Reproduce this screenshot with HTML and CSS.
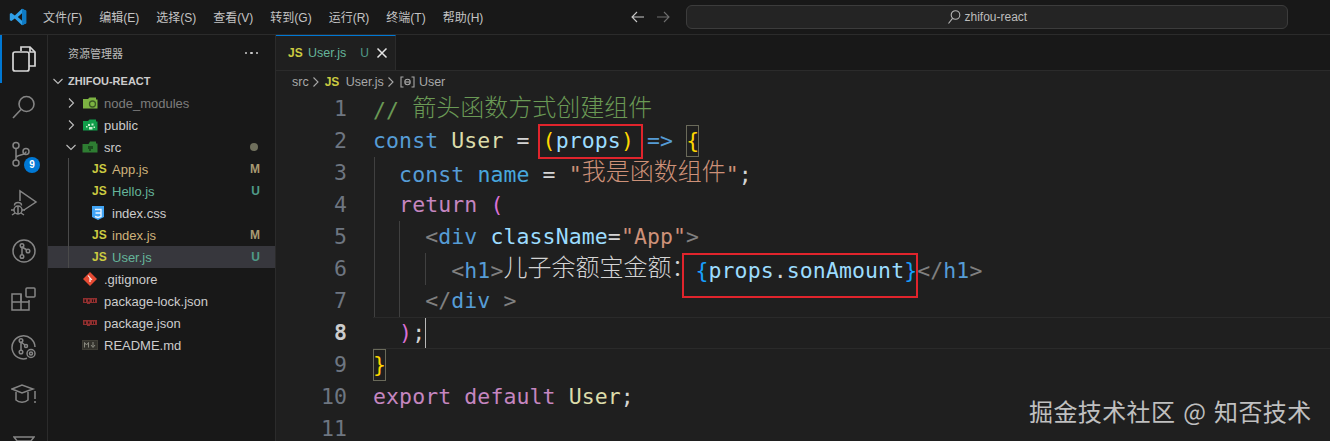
FILE: index.html
```html
<!DOCTYPE html>
<html lang="zh">
<head>
<meta charset="utf-8">
<title>User.js - zhifou-react</title>
<link rel="stylesheet" href="styles.css">
</head>
<body>
<div class="app">
  <header class="titlebar">
    <svg class="logo" width="18" height="18" viewBox="0 0 18 18"><path fill="#2f9fe8" d="M13 .8 17.2 2.800v12.400L13 17.200 5.800 10.400 2.400 13 .8 12.200V5.800L2.400 5l3.400 2.600zM13 5.200 8.800 9 13 12.800z"/><path fill="#0e7ac4" d="M13 .8 17.200 2.800v12.400L13 17.200z"/></svg>
    <nav class="menu">
      <span>文件(F)</span><span>编辑(E)</span><span>选择(S)</span><span>查看(V)</span><span>转到(G)</span><span>运行(R)</span><span>终端(T)</span><span>帮助(H)</span>
    </nav>
    <div class="navarrows">
      <svg width="16" height="16" viewBox="0 0 16 16" fill="none" stroke="#c8c8c8" stroke-width="1.1"><path d="M14 8H2.500M7 3 2 8l5 5"/></svg>
      <svg class="dim" width="16" height="16" viewBox="0 0 16 16" fill="none" stroke="#6e6e6e" stroke-width="1.1"><path d="M2 8h11.500M9 3l5 5-5 5"/></svg>
    </div>
    <div class="search">
      <svg width="14" height="16" viewBox="0 0 14 16" fill="none" stroke="#b5b5b5" stroke-width="1.100"><circle cx="8.500" cy="6" r="4.300"/><path d="M5.500 9.300 1.500 14.500"/></svg>
      <span>zhifou-react</span>
    </div>
  </header>

  <div class="workbench">
    <aside class="activity">
      <div class="act active">
        <svg width="26" height="28" viewBox="0 0 26 28" fill="none" stroke="#d7d7d7" stroke-width="1.700"><path d="M10 6V2h9l5 5v14h-6"/><path d="M19 2v5h5"/><rect x="2" y="7" width="16" height="19" rx="2"/></svg>
      </div>
      <div class="act">
        <svg width="26" height="26" viewBox="0 0 26 26" fill="none" stroke="#858585" stroke-width="1.600"><circle cx="15.500" cy="10" r="7.500"/><path d="M10 15.500 2 24"/></svg>
      </div>
      <div class="act">
        <svg width="26" height="28" viewBox="0 0 26 28" fill="none" stroke="#858585" stroke-width="1.500"><circle cx="5" cy="4.500" r="3"/><circle cx="5" cy="22" r="3"/><circle cx="15" cy="10.500" r="3"/><path d="M5 7.500V19M5 17c0-4 10-2 10-6.500"/></svg>
        <span class="badge">9</span>
      </div>
      <div class="act">
        <svg width="28" height="28" viewBox="0 0 28 28" fill="none" stroke="#858585" stroke-width="1.500"><path d="M10 12V2l16 11-12 8"/><circle cx="8" cy="21" r="4"/><path d="M4.500 16.500a3.500 3 0 0 1 7 0M8 17v8M1 21h3M12 21h3M2 26l3-2M14 26l-3-2"/></svg>
      </div>
      <div class="act">
        <svg width="24" height="24" viewBox="0 0 24 24" fill="none" stroke="#858585" stroke-width="1.500"><circle cx="12" cy="12" r="11"/><circle cx="10" cy="6.500" r="1.800"/><circle cx="10" cy="17.500" r="1.800"/><circle cx="16" cy="12" r="1.800"/><path d="M10 8v8M10 8l5 3"/></svg>
      </div>
      <div class="act">
        <svg width="25" height="25" viewBox="0 0 25 25" fill="none" stroke="#858585" stroke-width="1.500"><path d="M1 7h9v16H1zM1 15h17v8h-8"/><rect x="15" y="1" width="9" height="9" rx="1"/><path d="M10 7v8M18 15v-2"/></svg>
      </div>
      <div class="act">
        <svg width="26" height="26" viewBox="0 0 26 26" fill="none" stroke="#858585" stroke-width="1.500"><path d="M16 24.300A11.500 11.500 0 1 1 24 13"/><circle cx="10" cy="6.500" r="1.800"/><circle cx="10" cy="18" r="1.800"/><circle cx="15" cy="12" r="1.500"/><path d="M10 8v8.500M10 8l4 3"/><circle cx="20" cy="19.500" r="4"/><circle cx="20" cy="19.500" r="1.500"/></svg>
      </div>
      <div class="act">
        <svg width="26" height="24" viewBox="0 0 26 24" fill="none" stroke="#858585" stroke-width="1.500"><path d="M1 6 11 2l11 4-11 4zM5 9v8c3 3 9 3 12 0V9M24 8v8M24 18v2"/></svg>
      </div>
      <div class="act last">
        <svg width="22" height="14" viewBox="0 0 22 14" fill="none" stroke="#858585" stroke-width="1.500"><path d="M1 1h20l-7 9v4H8v-4zM4 5h14"/></svg>
      </div>
    </aside>

    <aside class="sidebar">
      <div class="side-head"><span>资源管理器</span><span class="dots"><i></i><i></i><i></i></span></div>
      <div class="section">
        <svg class="chev" width="12" height="12" viewBox="0 0 12 12"><path d="M1.500 4 6 8.500 10.500 4"/></svg>
        <span>ZHIFOU-REACT</span>
      </div>
      <ul class="tree">
        <li class="row l1 muted">
          <svg class="chev" width="12" height="12" viewBox="0 0 12 12"><path d="M4 1.500 8.500 6 4 10.500"/></svg>
          <svg class="ficon" width="16" height="14" viewBox="0 0 16 14"><path fill="#7cb342" d="M1 3h5l1.500-1.500H14v2h1.500v9H1z"/><circle cx="10.500" cy="8" r="3" fill="none" stroke="#3c5a25" stroke-width="1.300"/></svg>
          <span class="name">node_modules</span>
        </li>
        <li class="row l1">
          <svg class="chev" width="12" height="12" viewBox="0 0 12 12"><path d="M4 1.500 8.500 6 4 10.500"/></svg>
          <svg class="ficon" width="16" height="14" viewBox="0 0 16 14"><path fill="#119c4a" d="M1 3h5l1.500-1.500H14v2h1.500v9H1z"/><path fill="#c8f0d0" d="M6 6h2v2H6zM9.500 5.500h2v2h-2zM7 9h3.500v2.500H7zM4 8h1.500v1.500H4zM11.500 8.500H13V10h-1.500z"/></svg>
          <span class="name">public</span>
        </li>
        <li class="row l1">
          <svg class="chev" width="12" height="12" viewBox="0 0 12 12"><path d="M1.500 4 6 8.500 10.500 4"/></svg>
          <svg class="ficon" width="16" height="14" viewBox="0 0 16 14"><path fill="#2e7d32" d="M.500 4h6L8 1.500h6v2h1.500v9H.500z"/><path fill="#1b4d1e" d="M6 6h5v3H9v2H7V9H6z"/></svg>
          <span class="name">src</span>
          <span class="dotmark"></span>
        </li>
        <li class="row l2 mod">
          <span class="js">JS</span><span class="name">App.js</span><span class="git">M</span>
        </li>
        <li class="row l2 unt">
          <span class="js">JS</span><span class="name">Hello.js</span><span class="git">U</span>
        </li>
        <li class="row l2">
          <svg class="cssicon" width="12" height="14" viewBox="0 0 12 14"><path fill="#42a5f5" d="M0 0h12v11l-6 3-6-3z"/><path fill="none" stroke="#e8f4ff" stroke-width="1.400" d="M3 3.500h6v7l-3 1-3-1M3.500 7H9"/></svg>
          <span class="name">index.css</span>
        </li>
        <li class="row l2 mod">
          <span class="js">JS</span><span class="name">index.js</span><span class="git">M</span>
        </li>
        <li class="row l2 unt selected">
          <span class="js">JS</span><span class="name">User.js</span><span class="git">U</span>
        </li>
        <li class="row l1 file">
          <svg class="ficon" width="16" height="16" viewBox="0 0 16 16"><path fill="#e64a33" d="M8 1l7 7-7 7-7-7z"/><path fill="none" stroke="#fff" stroke-width="1.100" d="M6 4.500 10 9M8 7v4"/></svg>
          <span class="name">.gitignore</span>
        </li>
        <li class="row l1 file">
          <svg class="ficon" width="16" height="14" viewBox="0 0 16 14"><path fill="#8f2f2f" d="M1 4h14v5H8v1H5V9H1z"/><path fill="#1f1313" d="M2.500 5.500h1.500v2.500H2.500zM6 5.500h1.500v2H6zM10 5.500h1v2.500h-1zM12 5.500h1v2.500h-1z"/></svg>
          <span class="name">package-lock.json</span>
        </li>
        <li class="row l1 file">
          <svg class="ficon" width="16" height="14" viewBox="0 0 16 14"><path fill="#8f2f2f" d="M1 4h14v5H8v1H5V9H1z"/><path fill="#1f1313" d="M2.500 5.500h1.500v2.500H2.500zM6 5.500h1.500v2H6zM10 5.500h1v2.500h-1zM12 5.500h1v2.500h-1z"/></svg>
          <span class="name">package.json</span>
        </li>
        <li class="row l1 file">
          <svg class="ficon" width="16" height="12" viewBox="0 0 16 12"><rect x=".5" y="1.500" width="15" height="9" fill="#33322c" stroke="#3f3e36"/><path fill="none" stroke="#8a8a80" stroke-width="1" d="M2.500 8.500v-5l2 2.500 2-2.500v5M11 3v5M9 6l2 2.500L13 6"/></svg>
          <span class="name">README.md</span>
        </li>
      </ul>
    </aside>

    <main class="editor">
      <div class="tabs">
        <div class="tab">
          <span class="js">JS</span><span class="tabname">User.js</span><span class="tabgit">U</span>
          <svg width="14" height="14" viewBox="0 0 14 14" fill="none" stroke="#e6e6e6" stroke-width="1.500"><path d="M2.500 2.500l9 9M11.500 2.500l-9 9"/></svg>
        </div>
      </div>
      <div class="crumbs">
        <span>src</span>
        <svg width="10" height="12" viewBox="0 0 10 12"><path d="M2.500 1.500 7 6l-4.500 4.500"/></svg>
        <span class="js">JS</span>
        <span>User.js</span>
        <svg width="10" height="12" viewBox="0 0 10 12"><path d="M2.500 1.500 7 6l-4.500 4.500"/></svg>
        <svg class="sym" width="15" height="12" viewBox="0 0 15 12" fill="none" stroke="#75beff" stroke-width="1.200"><path d="M3.500 1H1v10h2.500M11.500 1H14v10h-2.500"/><circle cx="7.500" cy="6" r="2.700"/><path d="M5 6h5"/></svg>
        <span>User</span>
      </div>
      <div class="code">
        <i class="guide g1"></i><i class="guide g2"></i><i class="guide g3"></i>
        <div class="line"><span class="ln">1</span><code class="cm">// <b>箭头函数方式创建组件</b></code></div>
        <div class="line"><span class="ln">2</span><code><span class="kw">const</span> <span class="fn">User</span> = <span class="br">(</span><span class="var">props</span><span class="br">)</span> <span class="kw">=&gt;</span> <span class="br match">{</span></code></div>
        <div class="line"><span class="ln">3</span><code>  <span class="kw">const</span> <span class="cst">name</span> = <span class="str">"<b>我是函数组件</b>"</span>;</code></div>
        <div class="line"><span class="ln">4</span><code>  <span class="ret">return</span> <span class="br2">(</span></code></div>
        <div class="line"><span class="ln">5</span><code>    <span class="tg">&lt;</span><span class="kw">div</span> <span class="var">className</span>=<span class="str">"App"</span><span class="tg">&gt;</span></code></div>
        <div class="line"><span class="ln">6</span><code>      <span class="tg">&lt;</span><span class="kw">h1</span><span class="tg">&gt;</span><b>儿子余额宝金额：</b><span class="br3">{</span><span class="var">props</span>.<span class="var">sonAmount</span><span class="br3">}</span><span class="tg">&lt;/</span><span class="kw">h1</span><span class="tg">&gt;</span></code></div>
        <div class="line"><span class="ln">7</span><code>    <span class="tg">&lt;/</span><span class="kw">div</span> <span class="tg">&gt;</span></code></div>
        <div class="line current"><span class="ln">8</span><code>  <span class="br2">)</span>;<i class="cursor"></i></code></div>
        <div class="line"><span class="ln">9</span><code><span class="br match">}</span></code></div>
        <div class="line"><span class="ln">10</span><code><span class="ret">export</span> <span class="ret">default</span> <span class="fn">User</span>;</code></div>
        <div class="line"><span class="ln">11</span><code></code></div>
        <i class="redbox r1"></i><i class="redbox r2"></i>
      </div>
    </main>
  </div>
  <div class="watermark">掘金技术社区 @ 知否技术</div>
</div>
</body>
</html>
```
FILE: styles.css
```css
* { box-sizing: border-box; }
html, body { margin: 0; padding: 0; background: #181818; }
.app {
  position: relative;
  width: 1330px;
  height: 441px;
  overflow: hidden;
  display: flex;
  flex-direction: column;
  background: #181818;
  color: #ccc;
  font-family: "Liberation Sans", "Noto Sans CJK SC", sans-serif;
  font-size: 13px;
}

/* title bar */
.titlebar {
  flex: 0 0 35px;
  display: flex;
  align-items: center;
  border-bottom: 1px solid #2b2b2b;
  position: relative;
}
.logo { margin-left: 9px; }
.menu { display: flex; margin: -2px 0 0 16px; gap: 17px; font-size: 12px; color: #c4c4c4; }
.navarrows { display: flex; gap: 9px; margin-left: 147px; }
.search {
  margin-left: 15px;
  width: 602px;
  height: 24px;
  display: flex;
  justify-content: center;
  align-items: center;
  gap: 3px;
  background: #242424;
  border: 1px solid #3c3c3c;
  border-radius: 6px;
  font-size: 12px;
  color: #bdbdbd;
}

.workbench { flex: 1; display: flex; min-height: 0; }

/* activity bar */
.activity {
  flex: 0 0 48px;
  border-right: 1px solid #2b2b2b;
  display: flex;
  flex-direction: column;
  overflow: hidden;
}
.act {
  flex: 0 0 48px;
  display: flex;
  align-items: center;
  justify-content: center;
  position: relative;
}
.act.active { box-shadow: inset 2px 0 0 #0078d4; }
.badge {
  position: absolute;
  left: 24px;
  top: 26px;
  width: 16px;
  height: 16px;
  border-radius: 50%;
  background: #0078d4;
  color: #fff;
  font-size: 10px;
  font-weight: 700;
  line-height: 16px;
  text-align: center;
}

/* sidebar */
.sidebar {
  flex: 0 0 228px;
  border-right: 1px solid #2b2b2b;
  display: flex;
  flex-direction: column;
}
.side-head {
  flex: 0 0 35px;
  display: flex;
  align-items: center;
  justify-content: space-between;
  padding: 1px 17px 0 20px;
  font-size: 11px;
  color: #bbb;
}
.dots { display: flex; gap: 3px; }
.dots i { width: 2.500px; height: 2.500px; background: #ccc; border-radius: 50%; }
.section {
  flex: 0 0 22px;
  display: flex;
  align-items: center;
  gap: 4px;
  padding-left: 4px;
  font-size: 11px;
  font-weight: 700;
  color: #ccc;
}
.chev { fill: none; stroke: #bdbdbd; stroke-width: 1.100; flex: none; }
.tree { list-style: none; margin: 0; padding: 0; }
.row {
  height: 22px;
  display: flex;
  align-items: center;
  font-size: 13px;
  color: #ccc;
  position: relative;
}
.row.l1 { padding-left: 17px; }
.row.l1 .chev { margin-right: 5px; }
.row.l1.file { padding-left: 34px; }
.row.l1 .name { margin-left: 6px; }
.row.l2 { padding-left: 44px; }
.row.l2::before { content: ""; position: absolute; left: 20px; top: 0; bottom: 0; width: 1px; background: #4a4a4a; }
.row.l2 .name { margin-left: 8px; }
.cssicon { flex: none; }
.row.selected { background: #37373d; }
.muted { color: #7d7d7d; }
.mod { color: #d7ba7d; }
.mod .name { color: #cfb37b; }
.unt .name { color: #65b59a; }
.git { margin-left: auto; margin-right: 15px; font-size: 12px; font-weight: 700; }
.mod .git { color: #a99a72; }
.unt .git { color: #4f9a88; }
.dotmark { margin-left: auto; margin-right: 17px; width: 8px; height: 8px; border-radius: 50%; background: #6f6f5c; }
.js { color: #cbcb41; font-size: 12px; font-weight: 700; width: 12px; flex: none; font-family: "Liberation Sans", sans-serif; }

/* editor */
.editor { flex: 1; min-width: 0; display: flex; flex-direction: column; background: #1f1f1f; }
.tabs { flex: 0 0 35px; background: #181818; border-bottom: 1px solid #2b2b2b; display: flex; }
.tab {
  width: 120px;
  height: 35px;
  background: #1f1f1f;
  border-top: 1px solid #0078d4;
  border-right: 1px solid #2b2b2b;
  display: flex;
  align-items: center;
  padding-left: 12px;
}
.tabname { margin-left: 8px; color: #65b59a; font-size: 12.500px; }
.tabgit { margin-left: 14px; color: #4f9a88; font-size: 12px; }
.tab svg { margin-left: 6px; }
.crumbs {
  flex: 0 0 22px;
  display: flex;
  align-items: center;
  padding-left: 16px;
  font-size: 12.500px;
  color: #a8a8a8;
  gap: 2px;
}
.crumbs > svg { fill: none; stroke: #a8a8a8; stroke-width: 1.100; }
.crumbs .js { margin: 0 7px 0 2px; }
.crumbs .sym { margin: 0 2px 0 2px; }
.code { position: relative; flex: 1; min-height: 0; }
.line { height: 32px; display: flex; align-items: center; position: relative; }
.ln {
  flex: 0 0 71px;
  margin: -2px 26px 0 0;
  text-align: right;
  font: 21.500px "DejaVu Sans Mono", monospace;
  color: #6e7681;
}
.line code {
  font: 21.500px/32px "DejaVu Sans Mono", "Noto Sans CJK SC", monospace;
  letter-spacing: .1px;
  white-space: pre;
  color: #d4d4d4;
  position: relative;
}
.line code b {
  font: 300 24px/32px "Noto Sans CJK SC", sans-serif;
  letter-spacing: 0;
  position: relative;
  top: -2px;
}
.current::after {
  content: "";
  position: absolute;
  left: 97px;
  right: 0;
  top: 0;
  bottom: 0;
  border-top: 1px solid #2a2a2a;
  border-bottom: 1px solid #2a2a2a;
}
.current .ln { color: #ccc; font-weight: 700; }
.cursor { position: absolute; top: 0; right: -1px; width: 1.500px; height: 32px; background: #b8b8b8; }
.cm { color: #6a9955 !important; }
.kw { color: #569cd6; }
.fn { color: #dcdcaa; }
.var { color: #9cdcfe; }
.cst { color: #4fc1ff; opacity: .85; }
.str { color: #ce9178; }
.ret { color: #c586c0; }
.br { color: #ffd700; }
.br2 { color: #da70d6; }
.br3 { color: #179fff; }
.tg { color: #808080; }
.match { display: inline-block; height: 32px; outline: 1px solid #6a6a5a; outline-offset: -1px; }
.guide { position: absolute; width: 1px; background: #404040; }
.g1 { left: 98px; top: 64px; height: 160px; }
.g2 { left: 123px; top: 128px; height: 96px; }
.g3 { left: 149px; top: 160px; height: 32px; }
.redbox { position: absolute; border: 2px solid #e0242c; }
.r1 { left: 262px; top: 31px; width: 105px; height: 35px; }
.r2 { left: 406px; top: 160px; width: 236px; height: 45px; }

.watermark {
  position: absolute;
  left: 1029px;
  top: 393px;
  font: 24px/36px "Noto Sans CJK SC", sans-serif;
  letter-spacing: .4px;
  word-spacing: 2px;
  color: rgba(255,255,255,.72);
  white-space: nowrap;
}
```
